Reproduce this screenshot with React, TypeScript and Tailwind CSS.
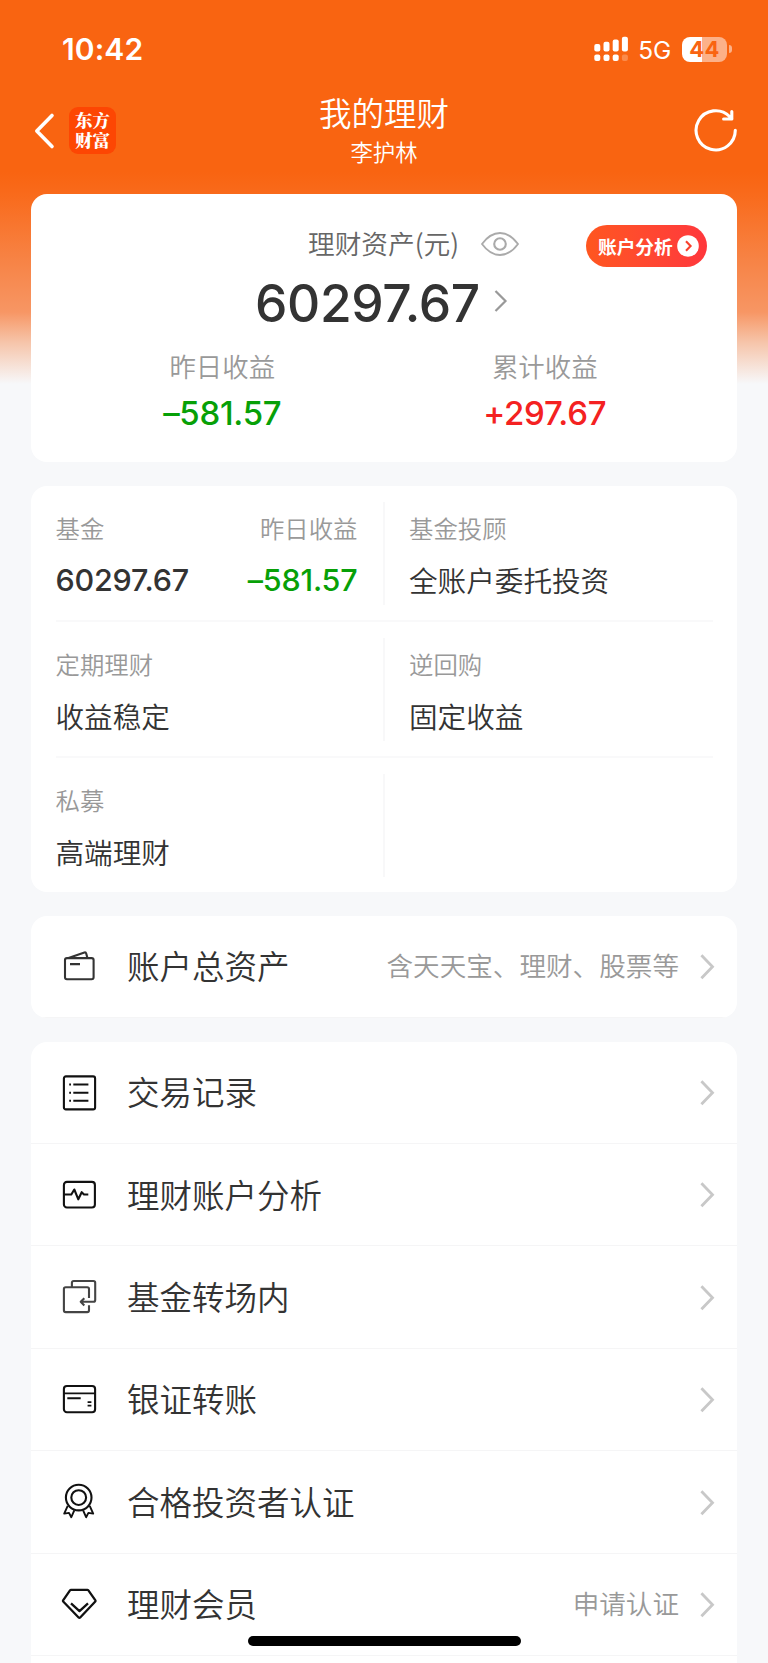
import type { ReactNode } from "react";

const Chevron = () => (
  <svg width="16" height="28" viewBox="0 0 16 28" fill="none" stroke="#c8c8c8" strokeWidth="2.8">
    <path d="M1.4 2.2 L12.5 13.7 L1.4 25.2" />
  </svg>
);

const Icon = ({ children, color = "#111" }: { children: ReactNode; color?: string }) => (
  <svg
    className="-mt-px shrink-0"
    width="40"
    height="40"
    viewBox="0 0 40 40"
    fill="none"
    stroke={color}
    strokeWidth="2.1"
    strokeLinejoin="round"
  >
    {children}
  </svg>
);

const WalletIcon = () => (
  <Icon color="#333">
    <rect x="6" y="12.1" width="28.6" height="21.2" rx="2" />
    <path d="M9.5 11.9 L25.4 6.5 Q26.8 6.1 27.2 7.5 L28.4 11.9 M11 18.1 H21" />
  </Icon>
);
const ListIcon = () => (
  <Icon>
    <rect x="4.9" y="3.4" width="31.2" height="33" rx="2" />
    <path d="M14.3 11.5 H29.4 M14.3 19.8 H29.4 M14.3 27.7 H29.4 M10.2 11.5 H12 M10.2 19.8 H12 M10.2 27.7 H12" strokeWidth="1.9" />
  </Icon>
);
const PulseIcon = () => (
  <Icon>
    <rect x="4.9" y="6.9" width="31" height="25.6" rx="3" />
    <path d="M5.3 19.5 H12.3 L15.3 14.5 L19.3 24.3 L22.7 17.2 L25 19.5 H29.3" />
  </Icon>
);
const TransferIcon = () => (
  <Icon color="#444">
    <path d="M30 21 V12 Q30 10.2 28.2 10.2 H6.7 Q4.9 10.2 4.9 12 V33.3 Q4.9 35.1 6.7 35.1 H28.2 Q30 35.1 30 33.3 V28.3" />
    <path d="M12.9 10 V5.8 Q12.9 4 14.7 4 H34.4 Q36.2 4 36.2 5.8 V23 Q36.2 24.8 34.4 24.8 H22 M25.3 21.2 L21.7 24.8 L25.3 28.4" />
  </Icon>
);
const CardIcon = () => (
  <Icon>
    <rect x="4.9" y="6" width="31.2" height="26.2" rx="3" />
    <path d="M5 13.4 H36 M8.3 18.2 H21.7 M28.6 22.1 H32.4 M28.6 25.6 H32.4" strokeWidth="1.9" />
  </Icon>
);
const MedalIcon = () => (
  <Icon>
    <circle cx="19.7" cy="15.6" r="12.8" />
    <circle cx="19.7" cy="15.6" r="7.4" />
    <path d="M8.7 23.8 L5.2 31.6 L10 30.9 L12.3 35.2 L15.3 28.4 M30.7 23.8 L34.2 31.6 L29.4 30.9 L27.1 35.2 L24.1 28.4" strokeWidth="1.9" />
  </Icon>
);
const DiamondIcon = () => (
  <Icon>
    <path d="M12 5.9 H28.4 Q29 5.9 29.4 6.4 L36.4 16.3 Q36.8 16.9 36.3 17.5 L21.2 33.5 Q20.4 34.3 19.6 33.5 L4.2 17.5 Q3.7 16.9 4.1 16.3 L11 6.4 Q11.4 5.9 12 5.9 Z M12 19.3 L20.5 27.1 L29 19.3" strokeWidth="2.3" />
  </Icon>
);

const MenuRow = ({ icon, title, note }: { icon: ReactNode; title: string; note?: string }) => (
  <div className="flex h-[102.4px] shrink-0 items-center border-b border-[#f5f5f6] pt-[1.5px] pr-[21px] pl-7">
    {icon}
    <span className="-mt-[3.5px] ml-[28px] flex-1 text-[32.5px] leading-[44px]">{title}</span>
    {note && <span className="-mt-[3px] mr-[21px] text-[26.6px] leading-9 text-[#999]">{note}</span>}
    <Chevron />
  </div>
);

const Cell = ({ label, value }: { label: string; value: string }) => (
  <div className="flex flex-col">
    <span className="text-[24.4px] leading-8 text-[#999]">{label}</span>
    <span className="mt-[16px] text-[28.6px] leading-10">{value}</span>
  </div>
);

const AmountCell = ({ label, value, tone }: { label: string; value: string; tone: string }) => (
  <div className="flex flex-col">
    <span className="text-[24.4px] leading-8 text-[#999]">{label}</span>
    <span className={"mt-[16px] font-[Inter] text-[30.5px] leading-10 font-medium tracking-[-0.2px] " + tone}>{value}</span>
  </div>
);

const GridRow = ({ left, right, last }: { left: ReactNode; right?: ReactNode; last?: boolean }) => (
  <div className={last ? "flex h-[135px]" : "flex h-[136px] border-b-2 border-[#f9f9fa]"}>
    <div className="mt-4 flex h-[103px] w-[329px] justify-between border-r-2 border-[#f8f8f9] pt-[10px] pr-[25px] text-left">
      {left}
    </div>
    <div className="mt-4 flex flex-1 pt-[10px] pl-[24.5px]">{right}</div>
  </div>
);

const StatusBar = () => (
  <div className="flex h-[98px] items-center pr-[36px] pl-[62px] text-white">
    <span className="font-[Inter] text-[30px] leading-9 font-semibold tracking-[0.1px]">10:42</span>
    <svg className="ml-auto" width="36" height="26" viewBox="0 0 36 26" fill="#fff">
      <rect x="0.3" y="8" width="6" height="7.4" rx="2" />
      <rect x="9.5" y="5.8" width="6" height="9.6" rx="2" />
      <rect x="18.7" y="3.4" width="6" height="12" rx="2" />
      <rect x="27.9" y="0.8" width="6" height="14.6" rx="2" />
      <rect x="0.3" y="18.6" width="6" height="6.4" rx="2" />
      <rect x="9.5" y="18.6" width="6" height="6.4" rx="2" />
      <rect x="18.7" y="18.6" width="6" height="6.4" rx="2" />
      <rect x="27.9" y="18.6" width="6" height="6.4" rx="2" opacity="0.25" />
    </svg>
    <span className="mt-px ml-[8px] font-[Inter] text-[24.5px] leading-7 font-normal tracking-[-0.2px]">5G</span>
    <div className="ml-[11px] flex h-[25px] w-[45px] items-center justify-center rounded-lg bg-[linear-gradient(90deg,#fff_44%,#fcb189_44%)] font-[Inter] text-[22px] leading-6 font-bold tracking-[0.3px] text-[#f96411]">
      44
    </div>
    <div className="ml-[2px] h-2 w-[3px] rounded-r-full bg-[#fcb189]" />
  </div>
);

const Header = () => (
  <div className="grid h-[96px] grid-cols-[1fr_auto_1fr] pr-[30px] pl-[34px] text-white">
    <div className="flex h-[65px] items-center">
      <svg width="22" height="38" viewBox="0 0 22 38" fill="none" stroke="#fff" strokeWidth="3.6" strokeLinecap="round" strokeLinejoin="round">
        <path d="M18 3.5 L2.8 19 L18 34.5" />
      </svg>
      <div className="ml-[13px] flex h-[47px] w-[47px] flex-col items-center justify-center rounded-[9px] bg-[#fd4603] pb-[2px] font-['Noto_Serif_CJK_SC','Noto_Sans_CJK_SC',serif] text-[17.5px] leading-[19.5px] font-extrabold">
        <span>东方</span>
        <span>财富</span>
      </div>
    </div>
    <div className="-ml-[4px] flex flex-col items-center">
      <span className="-mt-[8px] text-[32.5px] leading-[44px]">我的理财</span>
      <span className="mt-[1px] text-[22.4px] leading-[32px]">李护林</span>
    </div>
    <svg className="mt-[9px] justify-self-end" width="46" height="46" viewBox="0 0 46 46" fill="none" stroke="#fff" strokeWidth="3.1" strokeLinecap="round" strokeLinejoin="round">
      <path d="M43.3 23.3 A19.6 19.6 0 1 1 37.6 9.5 L39.8 11.9 M39.8 4.6 V12 H31.6" />
    </svg>
  </div>
);

const Stat = ({ label, value, tone }: { label: string; value: string; tone: string }) => (
  <div className="flex flex-1 flex-col items-center">
    <span className="text-[26.4px] leading-9 text-[#999]">{label}</span>
    <span className={"mt-[9px] font-[Inter] text-[33px] leading-10 font-medium tracking-[-0.3px] " + tone}>{value}</span>
  </div>
);

const Summary = () => (
  <section className="relative flex h-[268px] flex-col rounded-2xl bg-white px-[30px]">
    <div className="mt-[31px] flex h-9 items-center pl-[247px]">
      <span className="text-[26.7px] leading-9 whitespace-nowrap text-[#666]">理财资产(元)</span>
      <svg className="mt-px ml-[20.5px] shrink-0" width="40" height="26" viewBox="0 0 40 26" fill="none" stroke="#aaa" strokeWidth="1.8">
        <path d="M2 13 Q10 2 20 2 T38 13 Q30 24 20 24 T2 13 Z" />
        <circle cx="20" cy="13" r="5.8" strokeWidth="2.1" />
      </svg>
    </div>
    <div className="absolute top-[31px] right-[30px] flex h-[42px] w-[121px] items-center rounded-full bg-linear-to-r from-[#ff561f] to-[#ff373c] pl-[12px] text-white">
      <span className="-mt-px text-[18.7px] leading-6 font-bold whitespace-nowrap">账户分析</span>
      <svg className="ml-[4px] shrink-0" width="22" height="22" viewBox="0 0 22 22">
        <circle cx="11" cy="11" r="10.8" fill="#fff" />
        <path d="M9 6.2 L13.6 11 L9 15.8" fill="none" stroke="#f8402c" strokeWidth="2.1" />
      </svg>
    </div>
    <div className="mt-[12px] flex h-[60px] items-center pl-[194px]">
      <span className="font-[Inter] text-[51.5px] leading-[60px] font-medium tracking-[-0.4px]">60297.67</span>
      <svg className="-mt-[4px] ml-[14.5px]" width="14" height="24" viewBox="0 0 14 24" fill="none" stroke="#999" strokeWidth="2.2">
        <path d="M1.5 2 L11.5 12 L1.5 22" />
      </svg>
    </div>
    <div className="mt-[15px] flex pr-[1px]">
      <Stat label="昨日收益" value="–581.57" tone="text-[#07a007]" />
      <Stat label="累计收益" value="+297.67" tone="text-[#f42121]" />
    </div>
  </section>
);

export default function App() {
  return (
    <main className="relative h-[1663px] w-[768px] overflow-hidden bg-[#f7f8fa] bg-[linear-gradient(180deg,#f96411_0,#f96411_172px,#f96a1b_194px,#f78345_260px,#f79664_312px,#f6c4a9_342px,#f7f8fa_384px)] font-['Noto_Sans_CJK_SC',sans-serif] font-[350] text-[#333]">
      <StatusBar />
      <Header />
      <div className="flex flex-col px-[31px]">
        <Summary />
        <section className="mt-6 h-[406px] rounded-2xl bg-white px-[24.5px]">
          <GridRow
            left={
              <>
                <AmountCell label="基金" value="60297.67" tone="text-left" />
                <div className="text-right">
                  <AmountCell label="昨日收益" value="–581.57" tone="text-[#07a007]" />
                </div>
              </>
            }
            right={<Cell label="基金投顾" value="全账户委托投资" />}
          />
          <GridRow left={<Cell label="定期理财" value="收益稳定" />} right={<Cell label="逆回购" value="固定收益" />} />
          <GridRow last left={<Cell label="私募" value="高端理财" />} />
        </section>
        <section className="mt-[23.5px] h-[102.4px] overflow-hidden rounded-2xl bg-white">
          <MenuRow icon={<WalletIcon />} title="账户总资产" note="含天天宝、理财、股票等" />
        </section>
        <section className="mt-[23.7px] flex h-[720px] flex-col rounded-t-2xl bg-white">
          <MenuRow icon={<ListIcon />} title="交易记录" />
          <MenuRow icon={<PulseIcon />} title="理财账户分析" />
          <MenuRow icon={<TransferIcon />} title="基金转场内" />
          <MenuRow icon={<CardIcon />} title="银证转账" />
          <MenuRow icon={<MedalIcon />} title="合格投资者认证" />
          <MenuRow icon={<DiamondIcon />} title="理财会员" note="申请认证" />
        </section>
      </div>
      <div className="absolute top-[1636px] left-[247.5px] h-[10px] w-[273.5px] rounded-full bg-black" />
    </main>
  );
}
